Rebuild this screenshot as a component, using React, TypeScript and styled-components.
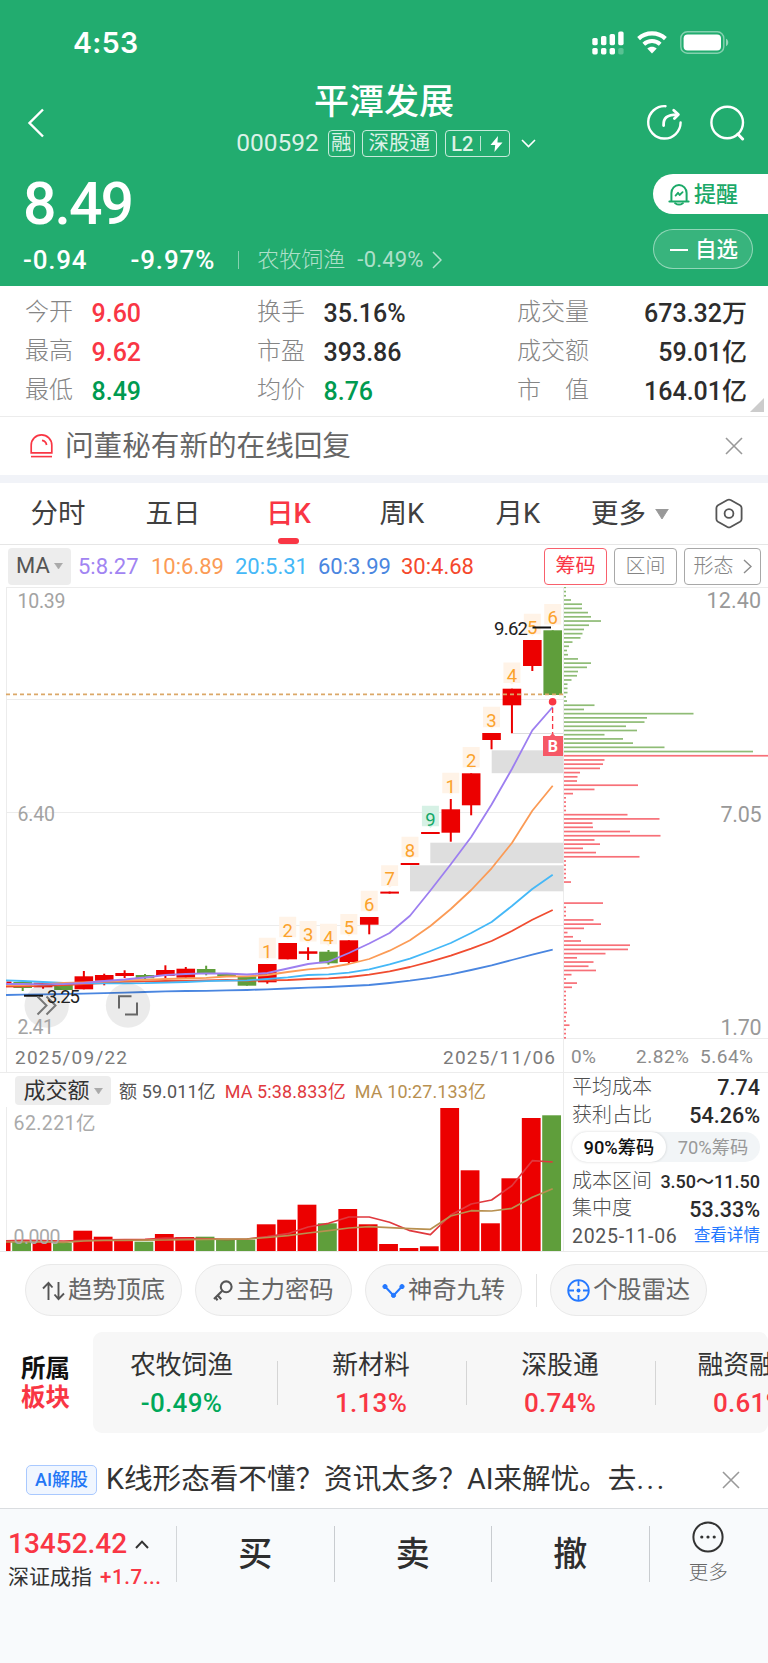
import React from 'react';
import styled, { createGlobalStyle } from 'styled-components';

const GlobalStyle = createGlobalStyle`
  * { box-sizing: border-box; }
  body {
    margin: 0;
    background: #fff;
    color: #333;
    font-family: Roboto, "Noto Sans CJK SC", sans-serif;
    -webkit-font-smoothing: antialiased;
  }
  svg { display: block; flex: none; }
`;

const RED = '#f93644';
const GREEN = '#009a50';

const Page = styled.div`
  width: 768px;
  height: 1663px;
  display: flex;
  flex-direction: column;
  overflow: hidden;
  background: #fff;
`;

type TextProps = {
  $size: number;
  $color?: string;
  $weight?: number;
  $spacing?: number;
  $lh?: number;
};

const Text = styled.span<TextProps>`
  font-size: ${p => p.$size}px;
  line-height: ${p => (p.$lh ? `${p.$lh}px` : 1)};
  color: ${p => p.$color || 'inherit'};
  font-weight: ${p => p.$weight || 400};
  letter-spacing: ${p => p.$spacing || 0}px;
  white-space: nowrap;
`;

/* ---------- header ---------- */

const Header = styled.header`
  height: 286px;
  flex: none;
  background: #22ac6f;
  color: #fff;
  display: flex;
  flex-direction: column;
`;

const StatusBar = styled.div`
  height: 76px;
  padding: 9px 39px 0 73px;
  display: flex;
  align-items: center;
  justify-content: space-between;
`;

const Clock = styled.span`
  font: 600 28.5px/1 Inter, sans-serif;
  letter-spacing: 0.3px;
  padding-top: 1px;
`;

const StatusIcons = styled.div`
  display: flex;
  align-items: center;
  gap: 13px;
`;

const NavBar = styled.div`
  height: 92px;
  padding: 0 22px 0 27px;
  display: grid;
  grid-template-columns: 101px 1fr 106px;
  align-items: center;
`;

const TitleBlock = styled.div`
  display: flex;
  flex-direction: column;
  align-items: center;
  gap: 9px;
  padding-bottom: 2px;
`;

const CodeRow = styled.div`
  display: flex;
  align-items: center;
  height: 28px;
  margin-left: 4px;
  color: rgba(255, 255, 255, 0.85);
`;

const Tag = styled.span<{ $width: number; $ml: number }>`
  width: ${p => p.$width}px;
  height: 27px;
  margin-left: ${p => p.$ml}px;
  border: 1px solid rgba(255, 255, 255, 0.75);
  border-radius: 4px;
  display: flex;
  align-items: center;
  justify-content: center;
  font-size: 20.5px;
  line-height: 1;
`;

const NavActions = styled.div`
  display: flex;
  justify-content: flex-end;
  gap: 26px;
  padding-top: 1px;
`;

const BackIcon = styled.svg`
  margin-top: 2px;
`;

const QuoteBlock = styled.div`
  flex: 1;
  display: flex;
  justify-content: space-between;
`;

const QuoteLeft = styled.div`
  padding: 9px 0 0 23px;
`;

const QuoteLine = styled.div`
  display: flex;
  align-items: center;
  height: 30px;
  margin-top: 14px;
`;

const Separator = styled.i<{ $height: number; $color: string; $margin?: string }>`
  width: 1px;
  height: ${p => p.$height}px;
  flex: none;
  background: ${p => p.$color};
  margin: ${p => p.$margin || 0};
`;

const QuoteRight = styled.div`
  width: 115px;
  padding-top: 6px;
  display: flex;
  flex-direction: column;
  gap: 15px;
`;

const RemindButton = styled.button`
  height: 40px;
  width: 115px;
  padding: 1px 0 0 15px;
  border: 0;
  border-radius: 20px 0 0 20px;
  background: #fff;
  color: #1ba968;
  font: 500 22px/1 Roboto, "Noto Sans CJK SC", sans-serif;
  display: flex;
  align-items: center;
  gap: 4px;
`;

const WatchButton = styled.button`
  height: 40px;
  width: 100px;
  padding: 1px 0 0 16px;
  border: 1px solid rgba(255, 255, 255, 0.45);
  border-radius: 20px;
  background: rgba(255, 255, 255, 0.1);
  color: #fff;
  font: 500 21.5px/1 Roboto, "Noto Sans CJK SC", sans-serif;
  display: flex;
  align-items: center;
  gap: 7px;
`;

const Dash = styled.i`
  width: 18px;
  height: 2px;
  background: #fff;
`;

/* ---------- stats ---------- */

const Stats = styled.section`
  height: 131px;
  flex: none;
  padding: 7px 21px 0 25px;
  display: grid;
  grid-template-columns: 232px 260px 1fr;
  grid-auto-rows: 39px;
  border-bottom: 1px solid #ececec;
  position: relative;
`;

const Stat = styled.div<{ $spread?: boolean }>`
  display: flex;
  align-items: center;
  justify-content: ${p => (p.$spread ? 'space-between' : 'flex-start')};
  gap: ${p => (p.$spread ? 0 : 18.5)}px;
`;

const StatLabel = styled.span`
  font-size: 24px;
  line-height: 1;
  font-weight: 300;
  color: #858585;
  white-space: pre;
  padding-bottom: 2px;
`;

const StatValue = styled.span<{ $color?: string }>`
  font-size: 25px;
  line-height: 1;
  font-weight: 500;
  color: ${p => p.$color || '#2d2d2d'};
  padding-top: 2px;
`;

const Corner = styled.i`
  position: absolute;
  right: 4px;
  bottom: 4px;
  border: 7px solid;
  border-color: transparent #ccc #ccc transparent;
`;

/* ---------- notice ---------- */

const Notice = styled.section`
  height: 66px;
  flex: none;
  padding: 0 25px 0 30px;
  border-bottom: 8px solid #f1f3f8;
  display: flex;
  align-items: center;
  gap: 12px;
`;

const Grow = styled.div`
  flex: 1;
  min-width: 0;
`;

/* ---------- tabs ---------- */

const Tabs = styled.nav`
  height: 62px;
  flex: none;
  padding: 0 25px 0 0;
  border-bottom: 1px solid #e6e6e6;
  display: flex;
  align-items: center;
`;

const Tab = styled.div<{ $width: number; $active?: boolean }>`
  width: ${p => p.$width}px;
  height: 61px;
  padding-top: 1px;
  display: flex;
  align-items: center;
  justify-content: center;
  gap: 9px;
  font-size: 27.5px;
  line-height: 1;
  color: ${p => (p.$active ? RED : '#404040')};
  font-weight: ${p => (p.$active ? 500 : 400)};
  position: relative;
  &::after {
    content: '';
    display: ${p => (p.$active ? 'block' : 'none')};
    position: absolute;
    bottom: 0;
    left: 50%;
    width: 21px;
    height: 6px;
    margin-left: -11px;
    border-radius: 3px;
    background: ${RED};
  }
`;

/* ---------- moving average toolbar ---------- */

const MaBar = styled.div`
  height: 42px;
  flex: none;
  padding: 2px 7px 2px 8px;
  display: flex;
  align-items: center;
`;

const SelectBox = styled.div<{ $width: number; $height: number }>`
  width: ${p => p.$width}px;
  height: ${p => p.$height}px;
  flex: none;
  border-radius: 4px;
  background: #ededed;
  display: flex;
  align-items: center;
  justify-content: center;
  gap: 4px;
`;

const MaValue = styled.span<{ $width: number; $color: string }>`
  width: ${p => p.$width}px;
  font-size: 22px;
  line-height: 1;
  color: ${p => p.$color};
  white-space: nowrap;
  padding-top: 1px;
`;

const MaButton = styled.button<{ $width: number; $active?: boolean }>`
  width: ${p => p.$width}px;
  height: 37px;
  margin-left: 7px;
  padding: 0;
  border: 1px solid ${p => (p.$active ? '#f8606c' : '#a8a8a8')};
  border-radius: 4px;
  background: #fff;
  color: ${p => (p.$active ? RED : '#858585')};
  font: ${p => (p.$active ? 400 : 300)} 20px/1 Roboto, "Noto Sans CJK SC", sans-serif;
  display: flex;
  align-items: center;
  justify-content: center;
  gap: 9px;
`;

/* ---------- lower chart area ---------- */

const Lower = styled.section`
  height: 179px;
  flex: none;
  display: flex;
  border-bottom: 1px solid #e9e9e9;
`;

const VolumePane = styled.div`
  width: 564px;
  display: flex;
  flex-direction: column;
  border-right: 1px solid #ececec;
`;

const VolumeHead = styled.div`
  height: 34px;
  padding: 3px 0 2px 15px;
  display: flex;
  align-items: center;
`;

const VolumeText = styled.span<{ $color: string; $ml: number }>`
  margin-left: ${p => p.$ml}px;
  padding-top: 3px;
  color: ${p => p.$color};
  font-size: 18px;
  line-height: 1;
  letter-spacing: 0.1px;
  white-space: nowrap;
`;

const ChipPane = styled.div`
  flex: 1;
  padding: 0 8px 0 8px;
  display: flex;
  flex-direction: column;
`;

const ChipRow = styled.div<{ $height: number; $size?: number }>`
  height: ${p => p.$height}px;
  display: flex;
  align-items: center;
  justify-content: space-between;
  font-size: 20px;
  line-height: 1;
  color: #4f4f4f;
  font-weight: 300;
  white-space: nowrap;
  b {
    font-size: ${p => p.$size || 21.5}px;
    font-weight: 500;
    color: #2b2b2b;
    padding-top: 2px;
    font-feature-settings: "palt" 0;
  }
`;

const Segmented = styled.div`
  height: 30px;
  margin: 3px 0 6px;
  border-radius: 15px;
  background: #f2f5f7;
  display: flex;
`;

const Segment = styled.div<{ $active?: boolean }>`
  width: 94px;
  border-radius: 15px;
  background: ${p => (p.$active ? '#fff' : 'transparent')};
  box-shadow: ${p => (p.$active ? '0 0 3px rgba(0,0,0,.16)' : 'none')};
  color: ${p => (p.$active ? '#111' : '#999')};
  font-size: 18.3px;
  font-weight: ${p => (p.$active ? 500 : 400)};
  line-height: 31px;
  text-align: center;
  white-space: nowrap;
`;

/* ---------- shortcuts, boards, banner ---------- */

const Shortcuts = styled.section`
  height: 80px;
  flex: none;
  padding: 12px 25px 0;
  display: flex;
  align-items: flex-start;
`;

const Pill = styled.button<{ $mr?: number }>`
  width: 157px;
  height: 52px;
  margin-right: ${p => p.$mr ?? 13}px;
  padding: 1px 0 0;
  border: 1px solid #e9e9e9;
  border-radius: 26px;
  background: #f7f7f7;
  color: #666;
  font: 400 24.3px/1 Roboto, "Noto Sans CJK SC", sans-serif;
  display: flex;
  align-items: center;
  justify-content: center;
  gap: 3px;
  white-space: nowrap;
`;

const Boards = styled.section`
  height: 101px;
  flex: none;
  display: flex;
`;

const BoardLabel = styled.div`
  width: 93px;
  padding: 22px 0 0 21px;
  font-size: 24.5px;
  line-height: 29px;
  font-weight: 700;
  color: #111;
  em {
    display: block;
    font-style: normal;
    color: ${RED};
  }
`;

const BoardList = styled.div`
  width: 675px;
  border-radius: 9px;
  background: #f7f7f7;
  overflow: hidden;
  display: flex;
  align-items: center;
`;

const Board = styled.div<{ $width: number }>`
  width: ${p => p.$width}px;
  flex: none;
  display: flex;
  flex-direction: column;
  align-items: center;
  gap: 12px;
  padding: 4px 2px 0 0;
  &:first-child { padding-right: 7px; }
`;

const Banner = styled.section`
  height: 76px;
  flex: none;
  padding: 18px 28px 0 26px;
  border-bottom: 1px solid #dadde0;
  display: flex;
  align-items: center;
`;

const AiTag = styled.span`
  width: 71px;
  height: 30px;
  flex: none;
  margin-right: 9px;
  border: 1px solid #a9c9ff;
  border-radius: 5px;
  background: #f0f6ff;
  color: #2477f5;
  font-size: 18px;
  font-weight: 500;
  line-height: 28px;
  text-align: center;
`;

/* ---------- bottom bar ---------- */

const BottomBar = styled.footer`
  flex: 1;
  background: #f8fafc;
  display: flex;
  align-items: flex-start;
  padding-top: 17px;
`;

const IndexBlock = styled.div`
  width: 176px;
  padding: 4px 0 0 8px;
  display: flex;
  flex-direction: column;
  gap: 9px;
`;

const Inline = styled.div<{ $gap: number }>`
  display: flex;
  align-items: center;
  gap: ${p => p.$gap}px;
`;

const Trade = styled.div`
  width: 156.5px;
  height: 56px;
  font-size: 34px;
  font-weight: 500;
  line-height: 57px;
  text-align: center;
  color: #2e2e2e;
`;

const More = styled.div`
  flex: 1;
  margin-top: -5px;
  padding-right: 1px;
  display: flex;
  flex-direction: column;
  align-items: center;
  gap: 10px;
`;

/* ---------- icons ---------- */

const CloseIcon = () => (
  <svg width="18" height="18" viewBox="0 0 18 18" stroke="#999" strokeWidth="1.6" fill="none">
    <path d="M1 1L17 17M17 1L1 17" />
  </svg>
);

const Caret = ({ w = 9, h = 6, color = '#aaa' }) => (
  <svg width={w} height={h} viewBox="0 0 10 6" preserveAspectRatio="none">
    <path d="M0.5 0H9.5L5 6Z" fill={color} stroke={color} strokeWidth="0.6" strokeLinejoin="round" />
  </svg>
);

const SignalIcon = () => (
  <svg width="32" height="24" viewBox="0 0 32 24" fill="#fff">
    <rect x="0.3" y="7" width="5.4" height="7.2" rx="1.6" />
    <rect x="9" y="5" width="5.4" height="9.2" rx="1.6" />
    <rect x="17.6" y="3" width="5.4" height="11.2" rx="1.6" />
    <rect x="26.2" y="0.4" width="5.4" height="13.8" rx="1.6" />
    <rect x="0.3" y="17" width="5.4" height="6.4" rx="1.6" />
    <rect x="9" y="17" width="5.4" height="6.4" rx="1.6" />
    <rect x="17.6" y="17" width="5.4" height="6.4" rx="1.6" />
    <rect x="26.2" y="17" width="5.4" height="6.4" rx="1.6" opacity="0.25" />
  </svg>
);

const WifiIcon = () => (
  <svg width="30" height="23" viewBox="0 0 30 23" fill="none" stroke="#fff">
    <path d="M1.6 7.6C9 0.7 21 0.7 28.4 7.6" strokeWidth="4.2" />
    <path d="M6.8 13.2C11.4 9 18.6 9 23.2 13.2" strokeWidth="4" />
    <path d="M10.3 17.4C13 15.2 17 15.2 19.7 17.4L15 22.4Z" fill="#fff" stroke="none" />
  </svg>
);

const BatteryIcon = () => (
  <svg width="49" height="23" viewBox="0 0 49 23">
    <rect x="0.8" y="0.8" width="43" height="21.4" rx="6.5" fill="none" stroke="#fff" strokeOpacity="0.45" strokeWidth="1.4" />
    <rect x="3.6" y="3.4" width="37.4" height="16.2" rx="4" fill="#fff" />
    <path d="M46 7.8C49 9 49 14 46 15.2Z" fill="#fff" fillOpacity="0.5" />
  </svg>
);

const ShareIcon = () => (
  <svg width="37" height="37" viewBox="0 0 37 37" fill="none" stroke="#fff" strokeWidth="2.4" strokeLinecap="round" strokeLinejoin="round">
    <path d="M19.5 2.2A16.2 16.2 0 1 0 34.6 18.5" />
    <path d="M17.6 21.5C17.2 14 21 10.5 31.5 10.6" strokeWidth="2.8" />
    <path d="M27.7 6.2L32.4 10.6L28.4 14.6" strokeWidth="2.8" />
  </svg>
);

const SearchIcon = () => (
  <svg width="37" height="37" viewBox="0 0 37 37" fill="none" stroke="#fff" strokeWidth="2.4" strokeLinecap="round">
    <circle cx="18.2" cy="18.5" r="15.8" />
    <path d="M29 30.2L33.6 35" strokeWidth="3" />
  </svg>
);

const BellIcon = () => (
  <svg width="22" height="23" viewBox="0 0 22 23" fill="none" stroke="#1ba968" strokeWidth="2" strokeLinecap="round" strokeLinejoin="round">
    <path d="M3.4 17.4V10A7.6 8 0 0 1 18.6 10V17.4" />
    <path d="M1.4 18.4H20.6" />
    <path d="M7.2 20.2Q11 23 14.8 20.2" />
    <path d="M7.6 12.6L10 9.8L11.6 12L14.6 9.2" strokeWidth="1.8" />
  </svg>
);

const AlarmIcon = () => (
  <svg width="23" height="24" viewBox="0 0 23 24" fill="none" stroke={RED} strokeWidth="1.7">
    <path d="M1.2 18.8V11.2A10.3 10.3 0 0 1 21.8 11.2V18.8Z" />
    <path d="M1 22.6H22" strokeWidth="1.6" />
    <path d="M12 6.4Q16 7 16.6 11" />
  </svg>
);

const HexIcon = () => (
  <svg width="28" height="31" viewBox="0 0 28 31" fill="none" stroke="#555" strokeWidth="1.8" strokeLinejoin="round">
    <path d="M12.4 2Q14 1.2 15.6 2L25 7.2Q26.6 8.2 26.6 10V21Q26.6 22.8 25 23.8L15.6 29Q14 29.8 12.4 29L3 23.8Q1.4 22.8 1.4 21V10Q1.4 8.2 3 7.2Z" />
    <circle cx="14" cy="15.5" r="4.4" />
  </svg>
);

const ArrowsIcon = () => (
  <svg width="23" height="20" viewBox="0 0 23 20" fill="none" stroke="#555" strokeWidth="1.9">
    <path d="M6.5 19V2M1 7.5L6.5 1.8L10.5 6.5M16.5 1V18M12.5 13.5L16.5 18.2L22 12.5" />
  </svg>
);

const KeyIcon = () => (
  <svg width="20" height="21" viewBox="0 0 20 21" fill="none" stroke="#555" strokeWidth="2.1">
    <circle cx="13.2" cy="6.8" r="5.4" />
    <path d="M9.3 10.7L1 19M4.6 15.2L8.2 19.2M1.8 17L4.6 20.2" />
  </svg>
);

const NineIcon = () => (
  <svg width="23" height="16" viewBox="0 0 23 16" fill="#2478ff" stroke="#2478ff">
    <path d="M3.5 4L11.5 12.5L19.5 4" fill="none" strokeWidth="2" />
    <circle cx="3" cy="3.6" r="2.1" />
    <circle cx="11.5" cy="12.4" r="2.1" />
    <circle cx="20" cy="3.6" r="2.1" />
  </svg>
);

const RadarIcon = () => (
  <svg width="23" height="23" viewBox="0 0 23 23" fill="none" stroke="#2478ff" strokeWidth="1.8">
    <circle cx="11.5" cy="11.5" r="10.3" />
    <path d="M11.5 1V7M11.5 16V22M1 11.5H7M16 11.5H22" />
    <circle cx="11.5" cy="11.5" r="2" fill="#2478ff" stroke="none" />
  </svg>
);

/* ---------- charts ---------- */

const UP = '#ec0000';
const DOWN = '#5f9e3b';

// Each candle: [direction, body top, body bottom, wick top, wick bottom, signal]
type Candle = [1 | 0, number, number, number, number, string?];

const candles: Candle[] = [
  [0, 982, 988, 982, 991],
  [1, 982.7, 987.3, 982.7, 988.7],
  [0, 984, 990, 984, 990],
  [1, 976.3, 989.3, 971, 989.3],
  [1, 975, 980.7, 973.7, 985.3],
  [1, 973, 976, 970.3, 978],
  [0, 975, 978.3, 974, 979.3],
  [1, 970, 976, 965.3, 978],
  [1, 968.7, 977.7, 967, 977.7],
  [0, 969, 973.3, 965.7, 975.3],
  [0, 974, 976.5, 974, 976.5],
  [0, 976.3, 985.7, 976.3, 985.7],
  [1, 964, 982.3, 964, 983.7, '1'],
  [1, 943, 959.3, 943, 959.3, '2'],
  [1, 951.3, 953.8, 947.3, 960, '3'],
  [0, 951.7, 963.3, 950, 964.7, '4'],
  [1, 940.3, 962, 940.3, 963.7, '5'],
  [1, 917, 924.7, 917, 934.3, '6'],
  [1, 891.6, 893.6, 891.6, 893.6, '7'],
  [1, 863, 865, 863, 865, '8'],
  [1, 832, 834, 832, 834, '9'],
  [1, 809.3, 832.7, 799, 841.7, '1'],
  [1, 773.3, 805.3, 773.3, 815.3, '2'],
  [1, 733, 740, 733, 749.3, '3'],
  [1, 688.7, 705.3, 688.7, 733.3, '4'],
  [1, 640, 666, 640, 671, '5'],
  [0, 630.3, 695, 630.3, 695, '6'],
];

const cx = (i: number) => 22.7 + 20.385 * i;

const toPoints = (start: number, ys: number[]) =>
  [`6,${start}`, ...ys.map((y, i) => `${cx(i).toFixed(1)},${y}`)].join(' ');

const maLines: [string, number, number[]][] = [
  ['#4a86e0', 995, [994.7, 994.3, 994, 993.7, 993.2, 992.6, 992, 991.4, 991, 990.8, 990.4, 990, 989.3, 988.5, 987.7, 987, 986, 985, 983, 980.7, 977.8, 974.3, 970, 965.3, 960, 954.7, 949.7]],
  ['#f04c30', 986.7, [986.3, 985.8, 985, 984, 983, 981.8, 981.3, 981, 980.8, 980.3, 980, 980.6, 980.4, 980, 979, 978.3, 977, 974.7, 971.3, 967, 961.7, 955.7, 948.7, 941, 931, 919.7, 910]],
  ['#45b8f7', 980.3, [981, 982, 982.8, 983, 983.3, 983.3, 983.2, 982.6, 982, 981.2, 980.6, 980.3, 979, 977.3, 975, 974.3, 972.7, 969.3, 964.3, 958.7, 951, 943, 933, 922, 906, 889, 874.7]],
  ['#fb9b56', 985, [985, 984.3, 983, 982.3, 981.6, 980.5, 979.8, 979, 978.5, 977.8, 976.5, 976.4, 975, 972, 969.3, 967.7, 964, 959, 950.7, 940.3, 926, 909, 890, 868.3, 843, 810.7, 785.7]],
  ['#9d7ff0', 984, [984, 984.3, 984, 983, 981, 979.5, 977.5, 975, 974, 973.3, 973.5, 974.5, 973, 968.5, 964, 961.7, 953, 943.5, 933, 915.8, 890.5, 864.3, 837, 804.5, 769, 730.3, 707]],
];

const chipGreen = [
  2, 2, 2, 7, 18, 18, 24, 27, 37, 25, 20, 18.5, 16.5, 8.5, 5, 3, 4, 14, 27, 23, 14, 13, 7.5, 3.5, 3.5,
  3.5, 2, 3, 30.5, 20, 129.5, 83, 80.5, 62, 73, 40.5, 59, 69, 100.5, 189,
];

const chipRed = [
  204, 40.5, 39, 36, 16, 13.5, 13, 74, 30.5, 9, 2, 2, 2, 2, 63.5, 95.5, 28.5, 29, 66, 96.5, 30.5, 36, 19,
  32, 75.5, 2, 2, 2, 2, 2, 7, 0, 0, 0, 0, 39, 2, 2, 2, 29.5, 37, 20, 3.5, 9, 17, 66, 64, 41.5, 13, 29.5,
  24.5, 32, 7.5, 2, 13, 8, 2, 2, 2, 2, 2, 3, 2, 2, 5.5, 2, 2, 2,
];

const Label = ({ x, y, w, size, color, children, weight = 400 }: {
  x: number; y: number; w: number; size: number; color: string; children: string; weight?: number;
}) => (
  <text x={x} y={y} fontSize={size} fill={color} fontWeight={weight} textLength={w} lengthAdjust="spacing">
    {children}
  </text>
);

const PriceChart = () => (
  <svg width="768" height="486" viewBox="0 587 768 486">
    <g stroke="#ececec" strokeWidth="1">
      <path d="M6 587.5H768M6 699.5H563M6 812.5H563M6 925.5H563M6 1038.5H768M0 1072.5H768" />
      <path d="M6.5 587V1073M563.5 587V1073" />
      <path d="M513 733.5H563" stroke="#ddd" />
    </g>
    <g fill="#dedede">
      <rect x="491.7" y="750.3" width="71.8" height="22.9" />
      <rect x="430.3" y="842.7" width="133.2" height="20.5" />
      <rect x="410" y="865.3" width="153.5" height="26" />
    </g>
    <rect x="6.5" y="981.5" width="5" height="4" fill={UP} />
    {candles.map(([up, t, b, wt, wb, sig], i) => {
      const c = cx(i);
      const col = up ? UP : DOWN;
      const nine = sig === '9';
      return (
        <g key={i}>
          <rect x={c - 1} y={wt} width="2" height={wb - wt} fill={col} />
          <rect x={c - 9.3} y={t} width="18.6" height={b - t} fill={col} />
          {sig && (
            <>
              <path
                d={`M${c - 8.5} ${wt - 26.3}h17v20.6h-6.5l-2 1.8l-2 -1.8h-6.5z`}
                fill={nine ? '#d6f1e5' : '#fff3e7'}
              />
              <text x={c} y={wt - 6.4} fontSize="18.5" textAnchor="middle" fill={nine ? '#14a868' : '#fba22c'}>
                {sig}
              </text>
            </>
          )}
        </g>
      );
    })}
    <path d="M6 694.4H563" stroke="#dba868" strokeWidth="1.8" strokeDasharray="4 3" />
    <g fill="none" strokeWidth="1.8" strokeLinejoin="round">
      {maLines.map(([color, start, ys]) => (
        <polyline key={color} points={toPoints(start, ys)} stroke={color} />
      ))}
    </g>

    <Label x={494} y={635} w={34} size={18.5} color="#222">9.62</Label>
    <path d="M532.5 627.5H551" stroke="#111" strokeWidth="2" />
    <circle cx="552.6" cy="701.7" r="3.8" fill={RED} />
    <path d="M552.6 708V734" stroke={RED} strokeWidth="1.3" strokeDasharray="5 3" />
    <path d="M543 736H550L552.6 733L555.2 736H563V756H543Z" fill="#f65866" />
    <text x="552.8" y="752" fontSize="16" fontWeight="700" textAnchor="middle" fill="#fff">B</text>

    <circle cx="46.7" cy="1005.5" r="22.2" fill="#000" fillOpacity="0.08" />
    <circle cx="128" cy="1005.5" r="22.2" fill="#000" fillOpacity="0.08" />
    <path d="M24 995.7H43" stroke="#111" strokeWidth="2" />
    <path d="M37.5 996.5L46.5 1005.5L37.5 1014.5M46.5 996.5L55.5 1005.5L46.5 1014.5" fill="none" stroke="#777" strokeWidth="2" />
    <path d="M131.5 996.3H119V1008.5M125 1014.6H137V1002.5" fill="none" stroke="#666" strokeWidth="2" />
    <Label x={47} y={1003} w={33} size={18.5} color="#222">3.25</Label>

    <Label x={17.5} y={607.5} w={48} size={19.5} color="#a3a3a3">10.39</Label>
    <Label x={17.5} y={821} w={37.5} size={19.5} color="#a3a3a3">6.40</Label>
    <Label x={17.5} y={1034} w={36.5} size={19.5} color="#a3a3a3">2.41</Label>
    <Label x={706.5} y={608.3} w={54.5} size={21.5} color="#999">12.40</Label>
    <Label x={720.5} y={821.7} w={41} size={21.5} color="#999">7.05</Label>
    <Label x={720.5} y={1035} w={41} size={21.5} color="#999">1.70</Label>

    <Label x={15} y={1063.6} w={112} size={19} color="#7a7a7a">2025/09/22</Label>
    <Label x={443} y={1063.6} w={112} size={19} color="#7a7a7a">2025/11/06</Label>
    <Label x={571} y={1063.3} w={25} size={19} color="#8c8c8c">0%</Label>
    <Label x={636} y={1063.3} w={53} size={19} color="#8c8c8c">2.82%</Label>
    <Label x={700} y={1063.3} w={53} size={19} color="#8c8c8c">5.64%</Label>

    {[...chipGreen, ...chipRed].map((w, k) => (
      <rect
        key={k}
        x="564"
        y={586.5 + 4.21 * k}
        width={w}
        height="1.7"
        fill={k < chipGreen.length ? '#8fbc76' : '#f77078'}
      />
    ))}
  </svg>
);

const volumes: [1 | 0, number][] = [
  [0, 1241.7], [1, 1242.3], [0, 1243], [1, 1230.7], [1, 1236.7], [1, 1240.3], [0, 1241.7], [1, 1234],
  [1, 1237], [0, 1236.7], [0, 1240], [0, 1239.7], [1, 1224.3], [1, 1219.7], [1, 1204.7], [0, 1223.3],
  [1, 1209], [1, 1224.3], [1, 1244], [1, 1248], [1, 1246.3], [1, 1108], [1, 1170.3], [1, 1223.3],
  [1, 1178.3], [1, 1118], [0, 1115.3],
];

const volMa5 = [1240.3, 1240.6, 1241, 1240.3, 1239.8, 1239.7, 1239.3, 1238, 1238.3, 1238.8, 1239.3, 1239, 1236.7, 1233.7, 1227, 1223.3, 1217, 1217, 1222.3, 1230.7, 1234.7, 1215, 1204, 1200, 1185.7, 1160.7, 1162];
const volMa10 = [1242, 1242, 1242.3, 1241, 1240.5, 1240.3, 1240.2, 1240, 1239.6, 1239.3, 1239.2, 1239, 1237.5, 1235.7, 1233, 1230.7, 1228, 1226.7, 1227.7, 1228.7, 1229.3, 1216, 1210.7, 1211, 1208.3, 1197.3, 1188.7];

const VolumeChart = () => (
  <svg width="563" height="144" viewBox="0 1107 563 144">
    <path d="M6.5 1073V1251" stroke="#ececec" />
    <rect x="6" y="1240" width="4.5" height="11" fill={UP} />
    {volumes.map(([up, top], i) => (
      <rect key={i} x={cx(i) - 10.5} y={top} width="18.8" height={1251 - top} fill={up ? UP : DOWN} />
    ))}
    <g fill="none" strokeWidth="1.7" strokeLinejoin="round">
      <polyline points={toPoints(1240.8, volMa5)} stroke="#e0393e" />
      <polyline points={toPoints(1242, volMa10)} stroke="#b89050" />
    </g>
    <text x="13.5" y="1130" fontSize="19.5" fill="#aaa" textLength="82">62.221亿</text>
    <text x="13.5" y="1243.8" fontSize="19.5" fill="#a9a9a9" textLength="47">0.000</text>
  </svg>
);

/* ---------- page ---------- */

const stats: { label: string; value: string; color?: string }[] = [
  { label: '今开', value: '9.60', color: RED },
  { label: '换手', value: '35.16%' },
  { label: '成交量', value: '673.32万' },
  { label: '最高', value: '9.62', color: RED },
  { label: '市盈', value: '393.86' },
  { label: '成交额', value: '59.01亿' },
  { label: '最低', value: '8.49', color: GREEN },
  { label: '均价', value: '8.76', color: GREEN },
  { label: '市　值', value: '164.01亿' },
];

const boards = [
  { name: '农牧饲渔', pct: '-0.49%', color: '#00a85a', width: 184 },
  { name: '新材料', pct: '1.13%', color: RED, width: 188 },
  { name: '深股通', pct: '0.74%', color: RED, width: 188 },
  { name: '融资融券', pct: '0.61%', color: RED, width: 188 },
];

export default function App() {
  return (
    <Page>
      <GlobalStyle />
      <Header>
        <StatusBar>
          <Clock>4:53</Clock>
          <StatusIcons>
            <SignalIcon />
            <WifiIcon />
            <BatteryIcon />
          </StatusIcons>
        </StatusBar>
        <NavBar>
          <BackIcon width="18" height="30" viewBox="0 0 18 30" fill="none" stroke="#fff" strokeWidth="2.4">
            <path d="M16 1.5L2.5 15L16 28.5" />
          </BackIcon>
          <TitleBlock>
            <Text $size={35} $weight={500} $lh={36}>平潭发展</Text>
            <CodeRow>
              <Text $size={24.5}>000592</Text>
              <Tag $width={27} $ml={9}>融</Tag>
              <Tag $width={75} $ml={7}>深股通</Tag>
              <Tag $width={65} $ml={8}>
                <Text $size={20} $weight={500}>L2</Text>
                <Separator $height={15} $color="rgba(255,255,255,.7)" $margin="0 9px 0 7px" />
                <svg width="13" height="16" viewBox="0 0 13 16" fill="#fff">
                  <path d="M8 0L0.5 9H5.2L4.4 16L12.5 6.6H7.4Z" />
                </svg>
              </Tag>
              <svg width="15" height="9" viewBox="0 0 15 9" fill="none" stroke="#fff" strokeWidth="1.6" style={{ marginLeft: 11 }}>
                <path d="M1 1L7.5 7.6L14 1" />
              </svg>
            </CodeRow>
          </TitleBlock>
          <NavActions>
            <ShareIcon />
            <SearchIcon />
          </NavActions>
        </NavBar>
        <QuoteBlock>
          <QuoteLeft>
            <Text as="div" $size={59} $weight={500} $lh={54} $spacing={-2}>8.49</Text>
            <QuoteLine>
              <Text $size={26} $weight={500} $spacing={0.8}>-0.94</Text>
              <Text $size={26} $weight={500} $spacing={0.9} style={{ marginLeft: 43 }}>-9.97%</Text>
              <Separator $height={18} $color="rgba(255,255,255,.45)" $margin="0 18px 0 23px" />
              <Text $size={22} $weight={300} $color="rgba(255,255,255,.65)">农牧饲渔</Text>
              <Text $size={22} $color="rgba(255,255,255,.65)" $spacing={0.2} style={{ marginLeft: 12 }}>-0.49%</Text>
              <svg width="10" height="18" viewBox="0 0 10 18" fill="none" stroke="#fff" strokeOpacity="0.65" strokeWidth="1.5" style={{ marginLeft: 8 }}>
                <path d="M1 1L9 9L1 17" />
              </svg>
            </QuoteLine>
          </QuoteLeft>
          <QuoteRight>
            <RemindButton><BellIcon />提醒</RemindButton>
            <WatchButton><Dash />自选</WatchButton>
          </QuoteRight>
        </QuoteBlock>
      </Header>

      <Stats>
        {stats.map((s, i) => (
          <Stat key={s.label} $spread={i % 3 === 2}>
            <StatLabel>{s.label}</StatLabel>
            <StatValue $color={s.color}>{s.value}</StatValue>
          </Stat>
        ))}
        <Corner />
      </Stats>

      <Notice>
        <AlarmIcon />
        <Grow><Text $size={28.6} $color="#666">问董秘有新的在线回复</Text></Grow>
        <CloseIcon />
      </Notice>

      <Tabs>
        <Tab $width={116}>分时</Tab>
        <Tab $width={114}>五日</Tab>
        <Tab $width={117} $active>日K</Tab>
        <Tab $width={110}>周K</Tab>
        <Tab $width={122}>月K</Tab>
        <Tab $width={102}>更多<Caret w={14} h={10} color="#999" /></Tab>
        <Grow />
        <HexIcon />
      </Tabs>

      <MaBar>
        <SelectBox $width={63} $height={37}>
          <Text $size={22} $color="#555">MA</Text><Caret />
        </SelectBox>
        <MaValue $width={73} $color="#a184f2" style={{ marginLeft: 7 }}>5:8.27</MaValue>
        <MaValue $width={84} $color="#fb9b56">10:6.89</MaValue>
        <MaValue $width={83} $color="#45b8f7">20:5.31</MaValue>
        <MaValue $width={83} $color="#4a86e0">60:3.99</MaValue>
        <MaValue $width={73} $color="#f5482c">30:4.68</MaValue>
        <Grow />
        <MaButton $width={63} $active>筹码</MaButton>
        <MaButton $width={63}>区间</MaButton>
        <MaButton $width={77}>
          形态
          <svg width="9" height="15" viewBox="0 0 9 15" fill="none" stroke="#8c8c8c" strokeWidth="1.4">
            <path d="M1 1L8 7.5L1 14" />
          </svg>
        </MaButton>
      </MaBar>

      <PriceChart />

      <Lower>
        <VolumePane>
          <VolumeHead>
            <SelectBox $width={96} $height={29}>
              <Text $size={22} $color="#333">成交额</Text><Caret />
            </SelectBox>
            <VolumeText $ml={8} $color="#555">额 59.011亿</VolumeText>
            <VolumeText $ml={9} $color="#e0393e">MA 5:38.833亿</VolumeText>
            <VolumeText $ml={9} $color="#b89050">MA 10:27.133亿</VolumeText>
          </VolumeHead>
          <VolumeChart />
        </VolumePane>
        <ChipPane>
          <ChipRow $height={28}>平均成本<b>7.74</b></ChipRow>
          <ChipRow $height={28}>获利占比<b>54.26%</b></ChipRow>
          <Segmented>
            <Segment $active>90%筹码</Segment>
            <Segment>70%筹码</Segment>
          </Segmented>
          <ChipRow $height={27} $size={18}>成本区间<b>3.50～11.50</b></ChipRow>
          <ChipRow $height={28}>集中度<b>53.33%</b></ChipRow>
          <ChipRow $height={29}>
            <Text $size={19.5} $color="#555" $spacing={0.7}>2025-11-06</Text>
            <Text $size={16.6} $color="#2478ff">查看详情</Text>
          </ChipRow>
        </ChipPane>
      </Lower>

      <Shortcuts>
        <Pill><ArrowsIcon />趋势顶底</Pill>
        <Pill><KeyIcon />主力密码</Pill>
        <Pill $mr={14}><NineIcon />神奇九转</Pill>
        <Separator $height={33} $color="#e2e2e2" $margin="10px 13px 0 0" />
        <Pill $mr={0}><RadarIcon />个股雷达</Pill>
      </Shortcuts>

      <Boards>
        <BoardLabel>所属<em>板块</em></BoardLabel>
        <BoardList>
          {boards.map((b, i) => (
            <React.Fragment key={b.name}>
              {i > 0 && <Separator $height={44} $color="#d5d5d5" />}
              <Board $width={b.width}>
                <Text $size={25.8}>{b.name}</Text>
                <Text $size={26} $weight={500} $spacing={0.3} $color={b.color}>{b.pct}</Text>
              </Board>
            </React.Fragment>
          ))}
        </BoardList>
      </Boards>

      <Banner>
        <AiTag>AI解股</AiTag>
        <Grow>
          <Text $size={28.6} $color="#333">
            K线形态看不懂？资讯太多？AI来解忧。去<Text $size={28.6} $spacing={2.6}>...</Text>
          </Text>
        </Grow>
        <CloseIcon />
      </Banner>

      <BottomBar>
        <IndexBlock>
          <Inline $gap={8}>
            <Text $size={28} $weight={500} $color={RED}>13452.42</Text>
            <svg width="14" height="9" viewBox="0 0 14 9" fill="none" stroke="#333" strokeWidth="2">
              <path d="M1 8L7 1.6L13 8" />
            </svg>
          </Inline>
          <Inline $gap={8}>
            <Text $size={21}>深证成指</Text>
            <Text $size={20.5} $weight={500} $color={RED} $spacing={0.6}>+1.7...</Text>
          </Inline>
        </IndexBlock>
        <Separator $height={56} $color="#d3d6d9" />
        <Trade>买</Trade>
        <Separator $height={56} $color="#c9ccd0" />
        <Trade>卖</Trade>
        <Separator $height={56} $color="#c9ccd0" />
        <Trade>撤</Trade>
        <Separator $height={56} $color="#c9ccd0" />
        <More>
          <svg width="32" height="32" viewBox="0 0 32 32" fill="none" stroke="#333" strokeWidth="2">
            <circle cx="16" cy="16" r="14.6" />
            <g fill="#333" stroke="none">
              <circle cx="9.8" cy="16" r="1.6" />
              <circle cx="16" cy="16" r="1.6" />
              <circle cx="22.2" cy="16" r="1.6" />
            </g>
          </svg>
          <Text $size={19.5} $color="#666" $weight={300}>更多</Text>
        </More>
      </BottomBar>
    </Page>
  );
}
